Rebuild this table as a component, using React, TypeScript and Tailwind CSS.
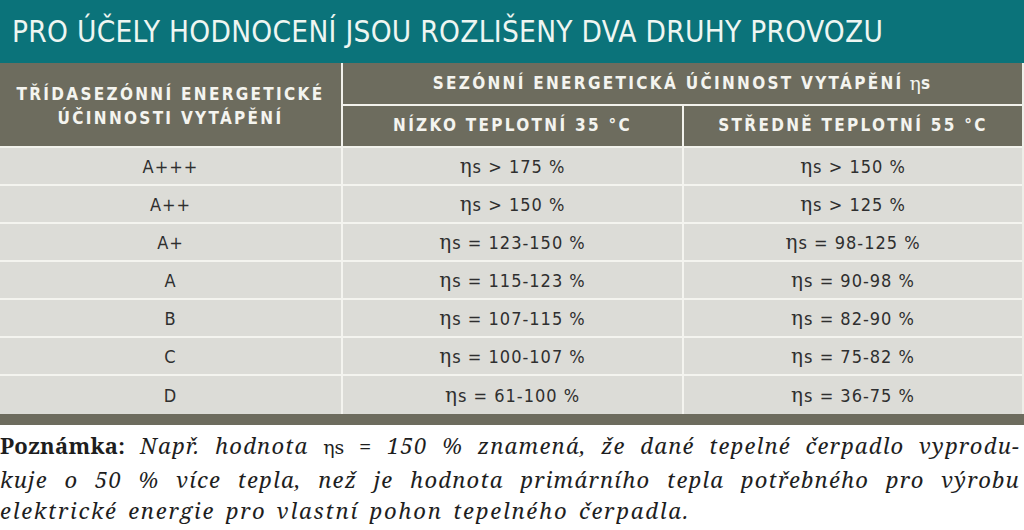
import React from 'react';

const cond = { fontFamily: '"DejaVu Sans Condensed", "Liberation Sans", sans-serif' };
const serif = { fontFamily: '"DejaVu Serif", "Liberation Serif", serif' };
const noto = { fontFamily: '"Noto Serif", "Liberation Serif", serif' };

const rows: [string, string, string][] = [
  ['A+++', '> 175 %', '> 150 %'],
  ['A++', '> 150 %', '> 125 %'],
  ['A+', '= 123-150 %', '= 98-125 %'],
  ['A', '= 115-123 %', '= 90-98 %'],
  ['B', '= 107-115 %', '= 82-90 %'],
  ['C', '= 100-107 %', '= 75-82 %'],
  ['D', '= 61-100 %', '= 36-75 %'],
];

const Eta = ({ value }: { value: string }) => (
  <span>
    <span style={serif} className="text-[20px]">η</span>s {value}
  </span>
);

export default function App() {
  return (
    <div className="w-[1024px] h-[530px] bg-white overflow-hidden">
      {/* Nadpis */}
      <div className="h-[63px] bg-[#0b737a] flex items-center pl-[12px]">
        <h1 style={cond} className="text-[29.5px] tracking-[0.3px] text-[#eef6f2] leading-none pt-[2px]">
          PRO ÚČELY HODNOCENÍ JSOU ROZLIŠENY DVA DRUHY PROVOZU
        </h1>
      </div>

      {/* Tabulka */}
      <div style={cond} className="border-r-2 border-[#eeeee8]">
        <div className="flex h-[85px] bg-[#6d6c5e] border-b-2 border-[#f2f2ec] text-[#f4f4ef] font-bold tracking-[2.3px]">
          <div className="w-[343px] border-r-2 border-[#f2f2ec] flex items-center justify-center text-center text-[17px] leading-[24px] pt-[2px]">
            TŘÍDASEZÓNNÍ ENERGETICKÉ<br />ÚČINNOSTI VYTÁPĚNÍ
          </div>
          <div className="flex-1 flex flex-col">
            <div className="h-[43px] border-b-2 border-[#f2f2ec] flex items-center justify-center text-[17px]">
              SEZÓNNÍ ENERGETICKÁ ÚČINNOST VYTÁPĚNÍ <span className="font-normal ml-[6px] tracking-normal text-[19px]" style={serif}>η</span>s
            </div>
            <div className="flex-1 flex text-[17px]">
              <div className="w-[341px] border-r-2 border-[#f2f2ec] flex items-center justify-center">NÍZKO TEPLOTNÍ 35 °C</div>
              <div className="flex-1 flex items-center justify-center">STŘEDNĚ TEPLOTNÍ 55 °C</div>
            </div>
          </div>
        </div>

        {rows.map(([cls, low, mid], i) => (
          <div
            key={cls}
            className={`flex h-[38px] bg-[#dcdcd7] text-[#2f2f2f] text-[18px] tracking-[1px] ${i < rows.length - 1 ? 'border-b-2 border-[#f4f4ef]' : ''}`}
          >
            <div className="w-[343px] border-r-2 border-[#f4f4ef] flex items-center justify-center">{cls}</div>
            <div className="w-[341px] border-r-2 border-[#f4f4ef] flex items-center justify-center"><Eta value={low} /></div>
            <div className="flex-1 flex items-center justify-center"><Eta value={mid} /></div>
          </div>
        ))}
      </div>
      <div className="h-[11px] bg-[#6d6c5e]" />

      {/* Poznámka */}
      <div style={noto} className="pt-[5px] pr-[4px] text-[22px] leading-[31.5px] text-[#1e1e1e] tracking-[1.2px]">
        <p className="text-justify [text-align-last:justify]">
          <b className="tracking-[0.3px]">Poznámka:</b> <i>Např. hodnota</i>{' '}
          <span style={serif} className="text-[19px] tracking-normal">ηs</span> <i>= 150 % znamená, že dané tepelné čerpadlo vyprodu-</i>
        </p>
        <p className="italic text-justify [text-align-last:justify]">
          kuje o 50 % více tepla, než je hodnota primárního tepla potřebného pro výrobu
        </p>
        <p className="italic tracking-[1.8px] [word-spacing:3px]">elektrické energie pro vlastní pohon tepelného čerpadla.</p>
      </div>
    </div>
  );
}
